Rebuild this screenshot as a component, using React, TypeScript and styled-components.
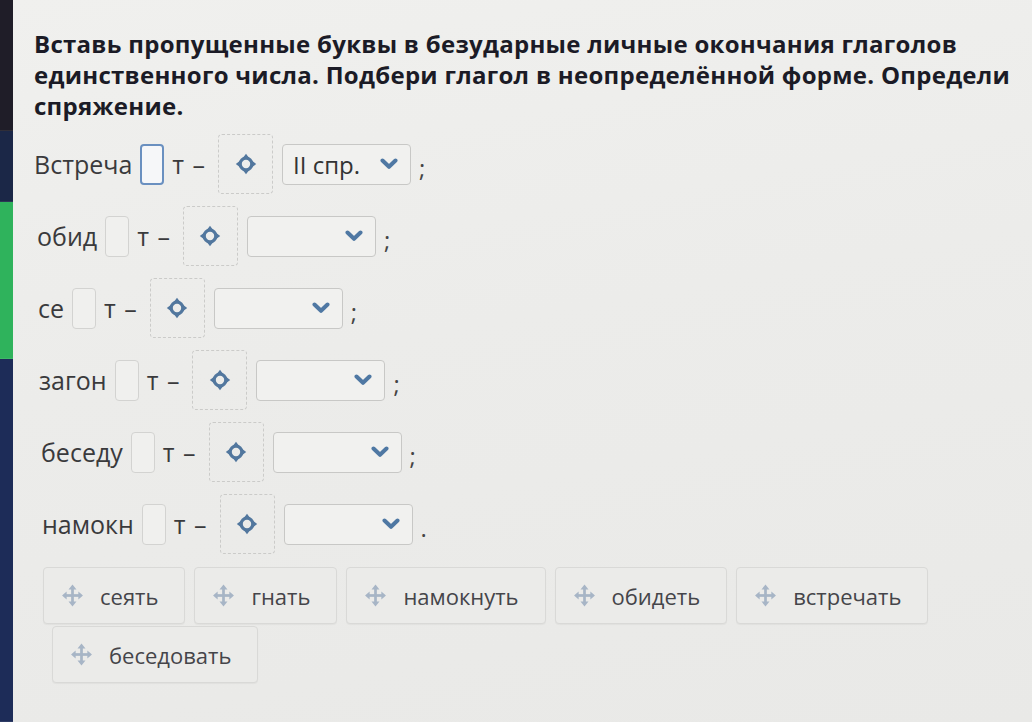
import React from "react";
import styled, { createGlobalStyle } from "styled-components";

const Global = createGlobalStyle`
  html, body { margin: 0; padding: 0; }
  body { font-family: "Open Sans", "Noto Sans", sans-serif; background: #ebebe9; }
  #root { height: 722px; }
`;

const Screen = styled.div`
  display: flex;
  width: 1032px;
  height: 722px;
  overflow: hidden;
  background: linear-gradient(170deg, #f0f0ee 0%, #ececea 45%, #e9e9e7 100%);
`;

const Strip = styled.div`
  width: 13px;
  flex: none;
  display: flex;
  flex-direction: column;
`;

const StripPart = styled.div<{ $h: number | "fill"; $c: string }>`
  background: ${(p) => p.$c};
  ${(p) => (p.$h === "fill" ? "flex: 1;" : `height: ${p.$h}px;`)}
  border-bottom: 1px solid rgba(255,255,255,0.08);
`;

const Content = styled.main`
  flex: 1;
  padding: 28px 0 0 21px;
  display: flex;
  flex-direction: column;
`;

const Title = styled.h1`
  margin: 0 0 13px;
  font-size: 24px;
  line-height: 31px;
  font-weight: 700;
  color: #1b1b26;
  letter-spacing: 0.28px;
  max-width: 990px;
`;

const Rows = styled.div`
  display: flex;
  flex-direction: column;
  gap: 12px;
`;

const Row = styled.div<{ $indent: number }>`
  display: flex;
  align-items: center;
  height: 60px;
  margin-left: ${(p) => p.$indent}px;
  color: #3a3a3c;
  font-size: 25px;
`;

const Word = styled.span`
  margin-right: 8px;
`;

const Blank = styled.span<{ $active?: boolean }>`
  width: 24px;
  height: 41px;
  box-sizing: border-box;
  border: ${(p) => (p.$active ? "2px solid #6a90c0" : "1px solid #d3d3d1")};
  border-radius: 4px;
  background: ${(p) => (p.$active ? "#f6f7f9" : "#f0f0ee")};
  margin-right: 8px;
`;

const Suffix = styled.span`
  margin-right: 13px;
  font-size: 25px;
  word-spacing: 2px;
`;

const DropZone = styled.span`
  width: 55px;
  height: 60px;
  box-sizing: border-box;
  border: 1px dashed #cbcbc9;
  border-radius: 4px;
  display: flex;
  align-items: center;
  justify-content: center;
  margin-right: 9px;
`;

const Select = styled.span`
  width: 129px;
  height: 41px;
  box-sizing: border-box;
  border: 1px solid #c8c8c6;
  border-radius: 4px;
  background: #f1f1ef;
  display: flex;
  align-items: center;
  justify-content: space-between;
  padding: 0 12px 0 10px;
  margin-right: 8px;
  font-size: 24px;
  color: #333;
`;

const Punct = styled.span`
  font-size: 24px;
  color: #444;
  margin-top: 6px;
`;

const Bank = styled.div`
  display: flex;
  flex-wrap: wrap;
  gap: 2px 9px;
  margin: 13px 0 0 9px;
  max-width: 920px;
`;

const Card = styled.div<{ $shift?: number }>`
  height: 57px;
  box-sizing: border-box;
  display: flex;
  align-items: center;
  gap: 17px;
  padding: 0 26px 0 18px;
  border: 1px solid #d9d9d7;
  border-radius: 4px;
  background: #ebebe9;
  box-shadow: 0 1px 1px rgba(0,0,0,0.04);
  font-size: 22px;
  color: #45454a;
  margin-left: ${(p) => p.$shift ?? 0}px;
`;

const Target = () => (
  <svg width="22" height="22" viewBox="0 0 22 22">
    <circle cx="11" cy="11" r="5.8" fill="none" stroke="#52779e" strokeWidth="3.2" />
    <path d="M11 0.8 L14.2 5 L7.8 5 Z M11 21.2 L14.2 17 L7.8 17 Z M0.8 11 L5 7.8 L5 14.2 Z M21.2 11 L17 7.8 L17 14.2 Z" fill="#52779e" />
  </svg>
);

const Chevron = () => (
  <svg width="18" height="12" viewBox="0 0 18 12">
    <path d="M2.5 2.5 L9 8.8 L15.5 2.5" fill="none" stroke="#4f78a3" strokeWidth="4" strokeLinecap="round" strokeLinejoin="round" />
  </svg>
);

const MoveIcon = () => (
  <svg width="21" height="23" viewBox="0 0 20 22">
    <g fill="#a7b5c6">
      <rect x="8.7" y="4" width="2.6" height="14" />
      <rect x="3" y="9.7" width="14" height="2.6" />
      <path d="M10 0.5 L13.8 5.2 L6.2 5.2 Z M10 21.5 L13.8 16.8 L6.2 16.8 Z M0 11 L4.4 7.2 L4.4 14.8 Z M20 11 L15.6 7.2 L15.6 14.8 Z" />
    </g>
  </svg>
);

const rows = [
  { word: "Встреча", value: "II спр.", end: ";", indent: 0, active: true },
  { word: "обид", value: "", end: ";", indent: 3 },
  { word: "се", value: "", end: ";", indent: 4 },
  { word: "загон", value: "", end: ";", indent: 5 },
  { word: "беседу", value: "", end: ";", indent: 7 },
  { word: "намокн", value: "", end: ".", indent: 8 },
];

const words = ["сеять", "гнать", "намокнуть", "обидеть", "встречать", "беседовать"];

export default function App() {
  return (
    <>
      <Global />
      <Screen>
        <Strip>
          <StripPart $h={130} $c="#1f1d28" />
          <StripPart $h={70} $c="#1b2747" />
          <StripPart $h={156} $c="#2fb35c" />
          <StripPart $h="fill" $c="#1d2c58" />
        </Strip>
        <Content>
          <Title>
            Вставь пропущенные буквы в безударные личные окончания глаголов единственного числа. Подбери глагол в
            неопределённой форме. Определи спряжение.
          </Title>
          <Rows>
            {rows.map((r) => (
              <Row key={r.word} $indent={r.indent}>
                <Word>{r.word}</Word>
                <Blank $active={r.active} />
                <Suffix>т –</Suffix>
                <DropZone>
                  <Target />
                </DropZone>
                <Select>
                  <span>{r.value}</span>
                  <Chevron />
                </Select>
                <Punct>{r.end}</Punct>
              </Row>
            ))}
          </Rows>
          <Bank>
            {words.map((w, i) => (
              <Card key={w} $shift={i === 5 ? 9 : 0}>
                <MoveIcon />
                <span>{w}</span>
              </Card>
            ))}
          </Bank>
        </Content>
      </Screen>
    </>
  );
}
